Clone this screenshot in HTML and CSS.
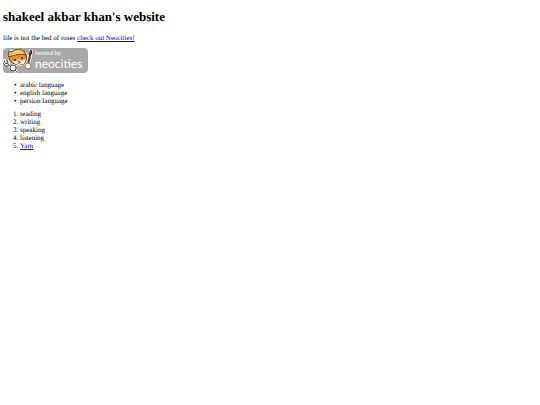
FILE: index.html
```html
<!DOCTYPE html>
<html lang="en">
<head>
    <meta charset="UTF-8">
    <meta name="viewport" content="width=device-width, initial-scale=1.0">
    <title>shakeel akbar khan's website</title>
    <link rel="stylesheet" href="styles.css">
</head>
<body>
    <h1>shakeel akbar khan's website</h1>
    <p>life is not the bed of roses <a href="https://neocities.org">check out Neocities!</a></p>

    <!-- Neocities badge -->
    <a class="badge" href="https://neocities.org" aria-label="hosted by neocities">
        <svg class="badge-cat" viewBox="0 0 31 25" aria-hidden="true">
            <!-- fork -->
            <path d="M1 11l1 4 3 2 5 5M5 12l1 4" fill="none" stroke="#fff" stroke-width="3"/>
            <path d="M1 12l1 3 3 1 5 5M4 12l1 4M0 15l3 3 3 0" fill="none" stroke="#4d4d52" stroke-width="1"/>
            <!-- head -->
            <path d="M5 7L7 2l4 1 4-2 5 1 4 4 1 6-3 4-7 2-6-2-3-4z" fill="#fff" stroke="#fff" stroke-width="1"/>
            <path d="M6 8l2-4 8-1 7 3 1 6-3 4-6 1-6-2-3-4z" fill="#ef8e36" stroke="#5a341f" stroke-width="1"/>
            <path d="M9 14q2-2 5-1l2-2 2 2 5-2-2 5-6 1z" fill="#fff5e5"/>
            <!-- helmet -->
            <path d="M5 8l1-5 3 1 3-2 5-1 4 2 2 4-5-1-6 1-6 2z" fill="#efbd38" stroke="#68451e" stroke-width="1"/>
            <path d="M9 5l4-2 4 1M9 7l6-2 5 0" fill="none" stroke="#ffe57a" stroke-width="1"/>
            <circle cx="12" cy="12" r="1" fill="#35251e"/>
            <circle cx="19" cy="10" r="1" fill="#35251e"/>
            <path d="M15 13h2l-1 1zM14 15q3 1 4-1" fill="#78402d" stroke="#78402d" stroke-width=".5"/>
            <!-- brush -->
            <path d="M28 2l-1 6-2 8" fill="none" stroke="#fff" stroke-width="4"/>
            <path d="M27 8l-2 8" stroke="#493a3a" stroke-width="2"/>
            <path d="M28 2q2 3-1 6l-1-1q0-3 2-5z" fill="#872b2b" stroke="#4c2425" stroke-width="1"/>
            <!-- paws -->
            <path d="M11 21l3 3" stroke="#fff" stroke-width="3"/>
            <path d="M11 21l3 3" stroke="#555" stroke-width="1"/>
            <circle cx="10" cy="20" r="3" fill="#fff8e8" stroke="#5c4b3b" stroke-width="1"/>
            <circle cx="25" cy="18" r="3" fill="#fff8e8" stroke="#a07a4a" stroke-width="1"/>
        </svg>
        <span class="badge-text">
            <span class="badge-small">hosted by</span>
            <span class="badge-name">neocities</span>
        </span>
    </a>

    <ul>
        <li>arabic language</li>
        <li>english language</li>
        <li>persion language</li>
    </ul>

    <ol>
        <li>reading</li>
        <li>writing</li>
        <li>speaking</li>
        <li>listening</li>
        <li><a href="#yarn">Yarn</a></li>
    </ol>
</body>
</html>
```
FILE: styles.css
```css
body {
    margin: 9px 3px;
    background-color: white;
    color: black;
    font-family: "Liberation Serif", "Times New Roman", serif;
    font-size: 7px;
    line-height: 8px;
    text-rendering: geometricPrecision;
}

h1 {
    margin: 0 0 9px;
    font-size: 13px;
    line-height: 16px;
}

p {
    margin: 0 0 6px;
}

a {
    color: #0000ee;
}

/* Grey hosting badge */
.badge {
    display: flex;
    width: 85px;
    height: 25px;
    border-radius: 4px;
    background-color: #a8a8a8;
    color: white;
    text-decoration: none;
}

.badge-cat {
    width: 31px;
    height: 25px;
}

.badge-text {
    display: flex;
    flex-direction: column;
    padding: 3px 0 0 1px;
    font-family: Lato, "Open Sans", sans-serif;
}

.badge-small {
    font-size: 6px;
    line-height: 6px;
}

.badge-name {
    font-size: 12px;
    line-height: 14px;
}

ul,
ol {
    margin: 8px 0 5px;
    padding-left: 17px;
}

ul {
    list-style-type: "•\00a0\00a0";
}

ol {
    margin-top: 5px;
}
```
